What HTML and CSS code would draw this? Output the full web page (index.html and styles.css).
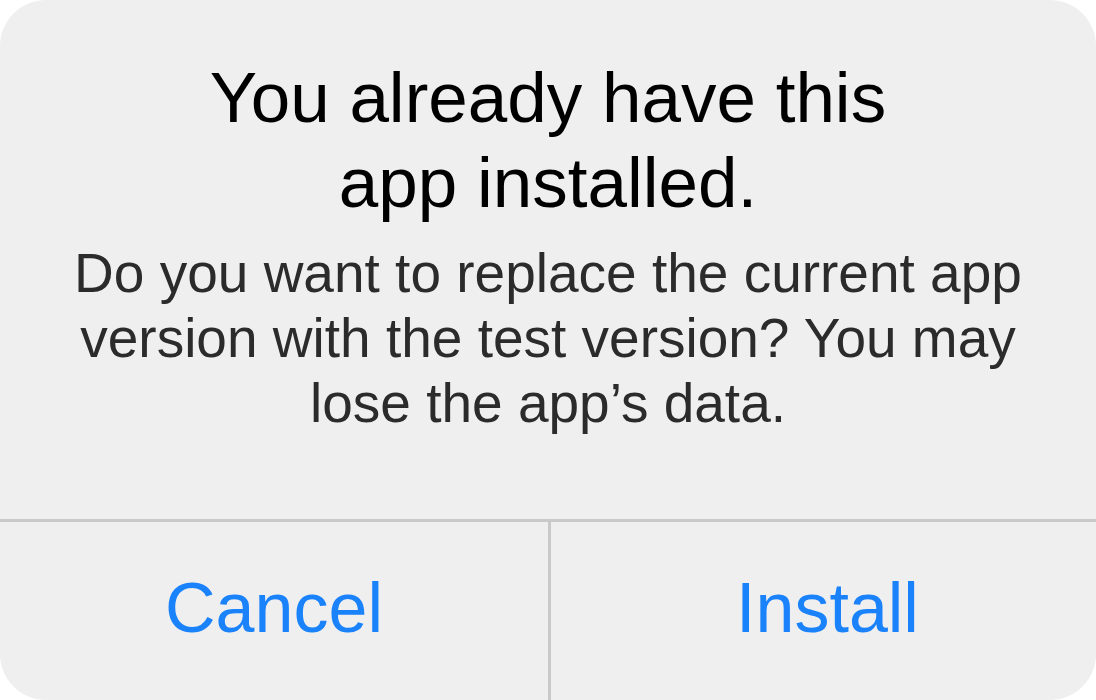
FILE: index.html
```html
<!DOCTYPE html>
<html lang="en">
<head>
    <meta charset="UTF-8">
    <title>Install</title>
    <link rel="stylesheet" href="styles.css">
</head>
<body>
    <div class="alert">
        <div class="message">
            <h1>You already have this<br>app installed.</h1>
            <p>Do you want to replace the current app<br>version with the test version? You may<br>lose the app’s data.</p>
        </div>
        <div class="actions">
            <button class="cancel">Cancel</button>
            <button class="install">Install</button>
        </div>
    </div>
</body>
</html>
```

FILE: styles.css
```css
body {
    margin: 0;
    background: #ffffff;
    font-family: 'Liberation Sans', Arial, sans-serif;
}

.alert {
    width: 1096px;
    height: 700px;
    background: #efefef;
    border-radius: 46px;
    overflow: hidden;
    display: flex;
    flex-direction: column;
}

.message {
    height: 519px;
    box-sizing: border-box;
    padding-top: 55px;
    text-align: center;
}

.message h1 {
    margin: 0;
    font-size: 71px;
    line-height: 85px;
    font-weight: normal;
    color: #000000;
}

.message p {
    margin: 16px 0 0;
    font-size: 55px;
    line-height: 65px;
    color: #2b2b2b;
}

.actions {
    flex: 1;
    display: grid;
    grid-template-columns: 548px 1fr;
    border-top: 3px solid #c9c9c9;
}

.actions button {
    background: none;
    border: none;
    font-family: inherit;
    font-size: 70px;
    color: #1a82fb;
    padding: 0 0 6px;
}

.actions .install {
    border-left: 3px solid #c9c9c9;
    padding-left: 8px;
}
```
